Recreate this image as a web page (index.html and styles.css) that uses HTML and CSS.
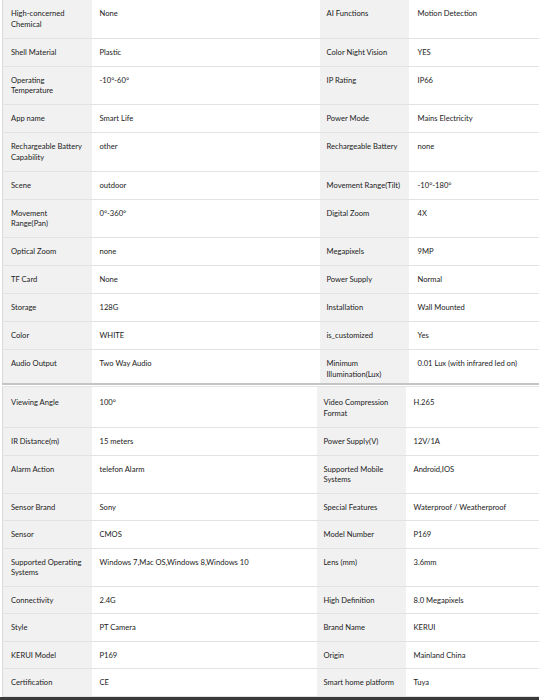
FILE: index.html
```html
<!DOCTYPE html>
<html>
<head>
<meta charset="utf-8">
<link rel="stylesheet" href="styles.css">
</head>
<body>
<div class="page">
<table class="spec spec-top">
<colgroup><col class="c1"><col class="c2"><col class="c3"><col class="c4"></colgroup>
<tr><th>High-concerned Chemical</th><td>None</td><th>AI Functions</th><td>Motion Detection</td></tr>
<tr><th>Shell Material</th><td>Plastic</td><th>Color Night Vision</th><td>YES</td></tr>
<tr><th>Operating Temperature</th><td>-10°-60°</td><th>IP Rating</th><td>IP66</td></tr>
<tr><th>App name</th><td>Smart Life</td><th>Power Mode</th><td>Mains Electricity</td></tr>
<tr><th>Rechargeable Battery Capability</th><td>other</td><th>Rechargeable Battery</th><td>none</td></tr>
<tr><th>Scene</th><td>outdoor</td><th>Movement Range(Tilt)</th><td>-10°-180°</td></tr>
<tr><th>Movement Range(Pan)</th><td>0°-360°</td><th>Digital Zoom</th><td>4X</td></tr>
<tr><th>Optical Zoom</th><td>none</td><th>Megapixels</th><td>9MP</td></tr>
<tr><th>TF Card</th><td>None</td><th>Power Supply</th><td>Normal</td></tr>
<tr><th>Storage</th><td>128G</td><th>Installation</th><td>Wall Mounted</td></tr>
<tr><th>Color</th><td>WHITE</td><th>is_customized</th><td>Yes</td></tr>
<tr class="last"><th>Audio Output</th><td>Two Way Audio</td><th>Minimum Illumination(Lux)</th><td>0.01 Lux (with infrared led on)</td></tr>
</table>
<table class="spec spec-bottom">
<colgroup><col class="c1"><col class="c2b"><col class="c3"><col class="c4"></colgroup>
<tr class="first"><th>Viewing Angle</th><td>100°</td><th>Video Compression Format</th><td>H.265</td></tr>
<tr><th>IR Distance(m)</th><td>15 meters</td><th>Power Supply(V)</th><td>12V/1A</td></tr>
<tr><th>Alarm Action</th><td>telefon Alarm</td><th>Supported Mobile Systems</th><td>Android,IOS</td></tr>
<tr><th>Sensor Brand</th><td>Sony</td><th>Special Features</th><td>Waterproof / Weatherproof</td></tr>
<tr><th>Sensor</th><td>CMOS</td><th>Model Number</th><td>P169</td></tr>
<tr><th>Supported Operating Systems</th><td>Windows 7,Mac OS,Windows 8,Windows 10</td><th>Lens (mm)</th><td>3.6mm</td></tr>
<tr><th>Connectivity</th><td>2.4G</td><th>High Definition</th><td>8.0 Megapixels</td></tr>
<tr><th>Style</th><td>PT Camera</td><th>Brand Name</th><td>KERUI</td></tr>
<tr><th>KERUI Model</th><td>P169</td><th>Origin</th><td>Mainland China</td></tr>
<tr><th>Certification</th><td>CE</td><th>Smart home platform</th><td>Tuya</td></tr>
</table>
<div class="bottom-bar"></div>
</div>
</body>
</html>
```
FILE: styles.css
```css
html, body {
  margin: 0;
  padding: 0;
  background: #ffffff;
}
.page {
  width: 539px;
  height: 700px;
  overflow: hidden;
  padding-left: 2px;
  box-sizing: border-box;
  display: flex;
  flex-direction: column;
  font-family: Lato, "Open Sans", sans-serif;
  font-size: 7.6px;
  color: #222;
}
.spec {
  border-collapse: collapse;
  table-layout: fixed;
  width: 537px;
  border-left: 1px solid #d9d9d9;
}
.c1 { width: 89px; }
.c2 { width: 228px; }
.c2b { width: 225px; }
.c3 { width: 89px; }
.c4 { width: auto; }
.spec th, .spec td {
  text-align: left;
  vertical-align: top;
  font-weight: normal;
  padding: 8px 4px 8px 8px;
  line-height: 10.5px;
  border-bottom: 1px solid #e2e2e2;
}
.spec-top th, .spec-top td {
  padding-top: 8.25px;
  padding-bottom: 8.25px;
}
.spec th {
  background: #f1f1f1;
}
.spec th:first-child {
  padding-right: 8px;
}
.spec th:nth-child(3) {
  padding-left: 7px;
  padding-right: 5px;
}
.spec td {
  background: #ffffff;
}
.spec-top td:last-child {
  padding-left: 9px;
}
.spec-top tr.last th, .spec-top tr.last td {
  padding-bottom: 4px;
  border-bottom: 2px solid #c4c4c4;
}
.spec-bottom {
  margin-top: 1px;
  border-top: 1px solid #e4e4e4;
}
.spec-bottom tr.first th, .spec-bottom tr.first td {
  padding-top: 10px;
  padding-bottom: 9px;
}
.spec-bottom td:last-child {
  padding-left: 8px;
}
.bottom-bar {
  margin-top: auto;
  flex-shrink: 0;
  height: 3px;
  margin-left: -2px;
  background: #3a3a3a;
}
```
